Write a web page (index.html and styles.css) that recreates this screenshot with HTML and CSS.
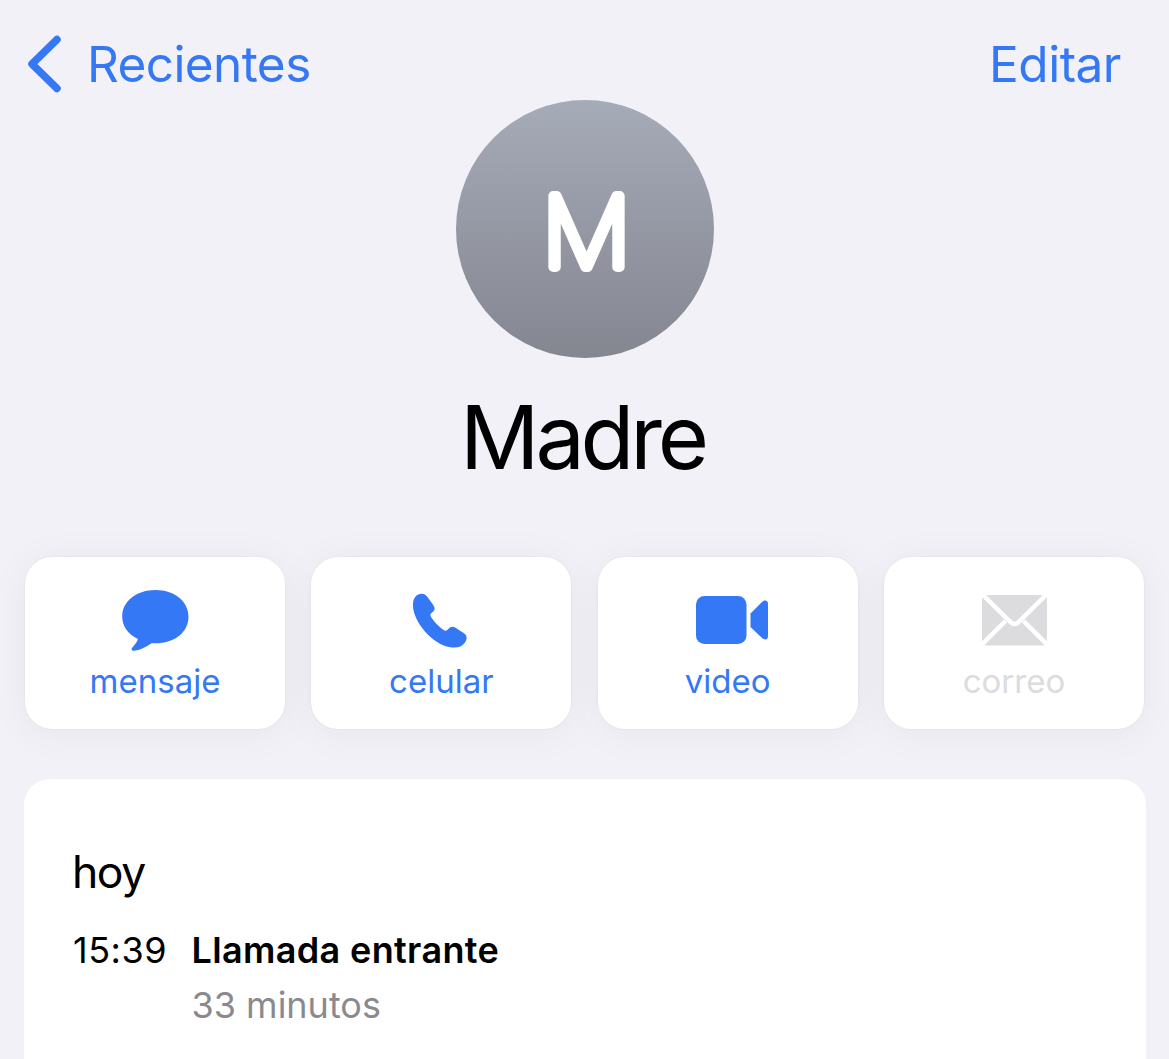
FILE: index.html
```html
<!DOCTYPE html>
<html lang="es">
<head>
    <meta charset="UTF-8">
    <meta name="viewport" content="width=device-width, initial-scale=1.0">
    <title>Madre</title>
    <link rel="stylesheet" href="styles.css">
</head>
<body>
    <header class="top-bar">
        <a class="back" href="#">
            <svg class="chevron" width="36" height="60" viewBox="0 0 36 60"><path d="M31 6.500 6 31l25 24.500"/></svg>
            <span class="back-text">Recientes</span>
        </a>
        <a class="edit" href="#">Editar</a>
    </header>

    <section class="contact">
        <div class="avatar">
            <svg width="258" height="258" viewBox="0 0 258 258"><text x="130.500" y="167" textLength="88.500" lengthAdjust="spacingAndGlyphs">M</text></svg>
        </div>
        <h1>Madre</h1>
    </section>

    <nav class="actions">
        <a class="action" href="#">
            <svg class="icon" width="68" height="64" viewBox="0 0 68 64"><path d="M34.500 2C16 2 1.200 13 1.200 28.500c0 9.500 5.500 17.500 15.800 22.500-1 3-3 5.500-6 9-1 1.500-.3 3 2 2.800 6-.8 12-3.500 17.500-7.600 22 1.300 37-10.200 37-26.700C67.500 13 53 2 34.500 2Z"/></svg>
            <span class="label">mensaje</span>
        </a>
        <a class="action" href="#">
            <svg class="icon" width="68" height="64" viewBox="0 0 68 64"><path d="M9.500 7.500c4.500-3 8.500-2 11 1.500l6 8.500c1.800 2.800 1.500 4.500-.8 6.500-3 2.300-2.800 3-1 6 3.500 5 7 8.500 11.600 11.800 2 1.400 3.200 1.200 5-.8 2.200-2.400 4.500-3 7.200-1.300l8.500 5.500c3.500 2.500 3.300 6 .8 9.500-3 4.300-8.300 5.800-15.800 4.300C25 55.500 7.500 35 6 19c-.5-5 .6-9 3.500-11.500Z"/></svg>
            <span class="label">celular</span>
        </a>
        <a class="action" href="#">
            <svg class="icon" width="80" height="64" viewBox="0 0 80 64"><rect x="8" y="8" width="50.500" height="48" rx="8.500"/><path d="M62.500 25.500 73.500 14.500c3.500-3.300 6.500-2 6.500 1.500v32c0 3.500-3 4.800-6.500 1.500L62.500 39Z"/></svg>
            <span class="label">video</span>
        </a>
        <a class="action disabled" href="#">
            <svg class="icon" width="68" height="64" viewBox="0 0 68 64"><rect x="2" y="7" width="65" height="50.500" rx="4"/><path class="fold" d="M3 7 31 34.500q3.500 3 7 0L66 7M1 57.500 25.500 33M68 57.500 43.500 33"/></svg>
            <span class="label">correo</span>
        </a>
    </nav>

    <main class="history">
        <h2>hoy</h2>
        <div class="call">
            <time>15:39</time>
            <div class="details">
                <strong>Llamada entrante</strong>
                <p>33 minutos</p>
            </div>
        </div>
    </main>
</body>
</html>
```
FILE: styles.css
```css
* {
    box-sizing: border-box;
}

body {
    margin: 0;
    height: 1059px;
    overflow: hidden;
    background: #f2f1f7;
    font-family: Inter, "Liberation Sans", sans-serif;
    color: #000;
}

a {
    color: #3478f6;
    text-decoration: none;
}

.top-bar {
    display: flex;
    justify-content: space-between;
    height: 100px;
    padding: 33px 48px 0 26px;
    font-size: 49.5px;
    line-height: 62px;
}

.back {
    display: flex;
    gap: 25px;
    letter-spacing: -0.6px;
}

.edit {
    letter-spacing: -0.5px;
}

.chevron {
    fill: none;
    stroke: #3478f6;
    stroke-width: 7.5;
    stroke-linecap: round;
    stroke-linejoin: round;
}

.contact {
    display: flex;
    flex-direction: column;
    align-items: center;
    height: 457px;
}

.avatar {
    width: 258px;
    height: 258px;
    border-radius: 50%;
    background: linear-gradient(#a6abb8, #848690);
}

/* rounded initial: thin letter with a round stroke on top */
.avatar text {
    fill: #fff;
    stroke: #fff;
    stroke-width: 10;
    stroke-linejoin: round;
    font-size: 98px;
    font-weight: 100;
    text-anchor: middle;
}

h1 {
    margin: 27px 0 0;
    padding-right: 4px;
    font-size: 88px;
    font-weight: 400;
    line-height: 104px;
    letter-spacing: -4.2px;
}

.actions {
    display: grid;
    grid-template-columns: repeat(4, 260px);
    justify-content: space-between;
    padding: 0 25px;
}

.action {
    display: flex;
    flex-direction: column;
    align-items: center;
    height: 172px;
    padding-top: 31px;
    border-radius: 27px;
    background: #fff;
    box-shadow: 0 0 2px rgba(0, 0, 0, 0.08), 0 4px 40px rgba(0, 0, 0, 0.05);
}

.icon {
    fill: #3478f6;
}

.label {
    margin-top: 9px;
    font-size: 33px;
    line-height: 40px;
}

.disabled {
    color: #dcdcde;
}

.disabled .icon {
    fill: #dcdcde;
}

.fold {
    fill: none;
    stroke: #fff;
    stroke-width: 4.5;
}

.history {
    height: 320px;
    margin: 50px 23px 0 24px;
    padding: 66px 49px 0;
    border-radius: 26px;
    background: #fff;
}

h2 {
    margin: 0 0 0 -1px;
    font-size: 44.5px;
    font-weight: 400;
    line-height: 54px;
    letter-spacing: -1.5px;
}

.call {
    display: flex;
    margin-top: 29px;
    font-size: 36px;
    line-height: 44px;
}

time {
    width: 118.5px;
    letter-spacing: 0.5px;
}

.details strong {
    font-weight: 600;
    letter-spacing: 0.35px;
}

.details p {
    margin: 11px 0 0;
    color: #8a8a8e;
}
```
